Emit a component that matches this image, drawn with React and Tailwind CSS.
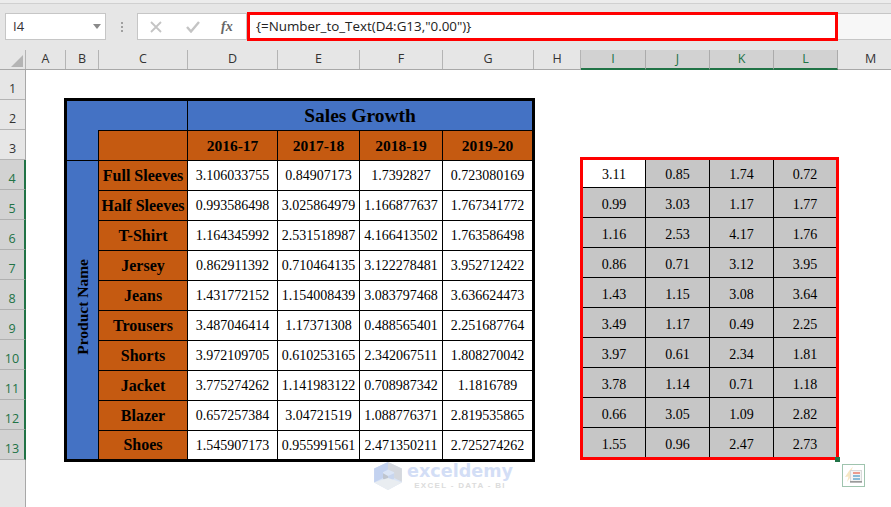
const cols = [
  ["A", "w-[40px]"], ["B", "w-[33px]"], ["C", "w-[89px]"], ["D", "w-[90px]"], ["E", "w-[82px]"], ["F", "w-[83px]"], ["G", "w-[91px]"], ["H", "w-[47px]"],
  ["I", "w-[65px]", 1], ["J", "w-[64px]", 1], ["K", "w-[64px]", 1], ["L", "w-[64px]", 1], ["M", "w-[66px]"],
];
const names = ["Full Sleeves", "Half Sleeves", "T-Shirt", "Jersey", "Jeans", "Trousers", "Shorts", "Jacket", "Blazer", "Shoes"];
const full = [
  ["3.106033755", "0.84907173", "1.7392827", "0.723080169"],
  ["0.993586498", "3.025864979", "1.166877637", "1.767341772"],
  ["1.164345992", "2.531518987", "4.166413502", "1.763586498"],
  ["0.862911392", "0.710464135", "3.122278481", "3.952712422"],
  ["1.431772152", "1.154008439", "3.083797468", "3.636624473"],
  ["3.487046414", "1.17371308", "0.488565401", "2.251687764"],
  ["3.972109705", "0.610253165", "2.342067511", "1.808270042"],
  ["3.775274262", "1.141983122", "0.708987342", "1.1816789"],
  ["0.657257384", "3.04721519", "1.088776371", "2.819535865"],
  ["1.545907173", "0.955991561", "2.471350211", "2.725274262"],
];
const short = [
  ["3.11", "0.85", "1.74", "0.72"], ["0.99", "3.03", "1.17", "1.77"], ["1.16", "2.53", "4.17", "1.76"],
  ["0.86", "0.71", "3.12", "3.95"], ["1.43", "1.15", "3.08", "3.64"], ["3.49", "1.17", "0.49", "2.25"],
  ["3.97", "0.61", "2.34", "1.81"], ["3.78", "1.14", "0.71", "1.18"], ["0.66", "3.05", "1.09", "2.82"],
  ["1.55", "0.96", "2.47", "2.73"],
];
const years = ["2016-17", "2017-18", "2018-19", "2019-20"];
const ui = "font-['Open_Sans',sans-serif]";
const serif = "font-['Liberation_Serif',serif]";

function Watermark() {
  return (
    <div className="absolute left-[373px] top-[461px] flex items-start gap-[4px]">
      <svg width="30" height="30" viewBox="0 0 27 32" preserveAspectRatio="none">
        <polygon points="13.5,1 26,8 26,23 13.5,31 1,23 1,8" fill="#dbe5f6" />
        <polygon points="13.5,1 1,8 1,23 9,18 9,12 13.5,9" fill="#c3d2f0" />
        <polygon points="13.5,1 26,8 26,22 19,18 19,12 13.5,9" fill="#d5d8de" />
        <polygon points="9,13 13.5,16 13.5,22 9,19" fill="#bfc5cf" />
        <polygon points="19,13 13.5,16 13.5,22 19,19" fill="#c9d6ee" />
        <polygon points="1,23 13.5,31 26,23 13.5,18" fill="#e9edf1" />
      </svg>
      <div className="flex flex-col items-center">
        <span className="font-['DejaVu_Sans',sans-serif] text-[17.6px] leading-[20px] font-bold text-[#d3def6]">exceldemy</span>
        <span className="font-['Liberation_Sans',sans-serif] text-[8px] leading-[9px] font-bold tracking-[1.3px] text-[#dcdcdc]">EXCEL - DATA - BI</span>
      </div>
    </div>
  );
}

function SmartTag() {
  return (
    <div className="absolute left-[842px] top-[464px] flex h-[23px] w-[23px] items-center justify-center border border-[#9fc4ae] bg-white">
      <svg width="19" height="19" viewBox="0 0 19 19">
        <path d="M9 0.5 L5 5 L1 11 L4.5 10.5 L3 16 L9 8 L6 8.5 Z" fill="#f6e7c3" />
        <rect x="6" y="4" width="12" height="13" fill="#d9d9d9" />
        <rect x="7" y="5" width="10" height="11" fill="#f4f4f4" />
        <rect x="9" y="6" width="7" height="2" fill="#ec9b8d" />
        <rect x="9" y="9" width="7" height="2" fill="#8bbcd8" />
        <rect x="9" y="12" width="7" height="2" fill="#8bbcd8" />
        <rect x="6" y="15" width="12" height="1.5" fill="#9a9a9a" />
      </svg>
    </div>
  );
}

export default function App() {
  return (
    <div className="relative flex h-[507px] w-[891px] flex-col overflow-hidden bg-white">
      {/* Formula bar */}
      <div className="h-[50px] shrink-0 bg-[#e6e6e6]">
        <div className="h-[4px] border-b border-[#d0d0d0] bg-[#ececec]" />
        <div className="mt-[9px] flex h-[27px] items-stretch">
          <div className={`ml-[5px] flex w-[101px] items-center justify-between border border-[#c6c6c6] bg-white pl-[7px] pr-[4px] text-[13px] text-[#333] ${ui}`}>
            <span>I4</span>
            <span className="h-0 w-0 border-x-[4px] border-t-[5px] border-x-transparent border-t-[#8a8a8a]" />
          </div>
          <div className="flex w-[31px] flex-col items-center justify-center gap-[2px]">
            <span className="h-[2px] w-[2px] bg-[#a0a0a0]" />
            <span className="h-[2px] w-[2px] bg-[#a0a0a0]" />
            <span className="h-[2px] w-[2px] bg-[#a0a0a0]" />
          </div>
          <div className="flex w-[110px] items-center border border-[#c6c6c6] bg-white">
            <svg className="ml-[12px]" width="12" height="12" viewBox="0 0 12 12"><path d="M1 1 L11 11 M11 1 L1 11" stroke="#c4c4c4" strokeWidth="1.8" fill="none" /></svg>
            <svg className="ml-[24px]" width="14" height="12" viewBox="0 0 14 12"><path d="M1 6 L5 10.5 L13 1" stroke="#c4c4c4" strokeWidth="2.4" fill="none" /></svg>
            <span className="ml-[21px] font-['Liberation_Serif',serif] text-[14px] font-bold italic text-[#666]">fx</span>
          </div>
          <div className="relative z-10 -my-[1px] flex w-[591px] items-center border-[3px] border-[#ff0000] bg-white pl-[6px] text-[13.4px] text-[#222] font-['Open_Sans',sans-serif]">
            {'{=Number_to_Text(D4:G13,"0.00")}'}
          </div>
          <div className="grow border-y border-[#c6c6c6] bg-[#f7f7f7]" />
        </div>
      </div>

      {/* Column headers */}
      <div className="flex h-[20px] shrink-0 border-b border-[#a8a8a8] bg-[#e6e6e6]">
        <div className="flex w-[26px] shrink-0 items-end justify-end border-r border-[#b4b4b4] p-[2px]">
          <span className="h-0 w-0 border-b-[12px] border-l-[12px] border-b-[#b4b4b4] border-l-transparent" />
        </div>
        {cols.map(([c, w, sel]) => (
          <div key={c} className={`${w} flex shrink-0 items-center justify-center border-r text-[12.5px] ${ui} ${sel ? "-mb-[1px] border-b-2 border-r-[#ababab] border-b-[#217346] bg-[#d2d2d2] text-[#217346]" : "border-[#b4b4b4] text-[#333]"}`}>{c}</div>
        ))}
      </div>

      {/* Sheet */}
      <div className="flex grow">
        <div className="flex w-[26px] shrink-0 flex-col border-r border-[#a8a8a8] bg-[#e6e6e6]">
          {Array.from({ length: 13 }, (_, i) => i + 1).map((n) => {
            const sel = n >= 4;
            return (
              <div key={n} className={`flex h-[30px] shrink-0 items-end justify-center border-b pb-px text-[12.5px] leading-[18px] ${ui} ${sel ? "-mr-[1px] border-r-2 border-b-[#b0b0b0] border-r-[#217346] bg-[#d2d2d2] text-[#217346]" : "border-[#b4b4b4] text-[#333]"}`}>{n}</div>
            );
          })}
        </div>

        <div className="flex items-start pl-[38px] pt-[28px]">
          <table className={`w-[468px] table-fixed border-collapse border-[3px] border-black text-black ${serif}`}>
            <colgroup>
              <col className="w-[33px]" /><col className="w-[89px]" /><col className="w-[90px]" /><col className="w-[82px]" /><col className="w-[83px]" /><col className="w-[91px]" />
            </colgroup>
            <tbody>
              <tr className="h-[31px]">
                <td colSpan={2} className="bg-[#4472c4] border-b-0 border-r border-black" />
                <td colSpan={4} className="border-b border-black bg-[#4472c4] text-center text-[19.5px] font-bold">Sales Growth</td>
              </tr>
              <tr className="h-[30px]">
                <td className="bg-[#4472c4]" />
                <td className="border border-black bg-[#c55a11]" />
                {years.map((y) => <td key={y} className="border border-black bg-[#c55a11] text-center text-[15.5px] font-bold">{y}</td>)}
              </tr>
              {names.map((n, i) => (
                <tr key={n} className="h-[30px]">
                  {i === 0 && (
                    <td rowSpan={10} className="border-t border-r border-black bg-[#4472c4] text-center align-middle">
                      <span className="inline-block rotate-180 text-[15.5px] font-bold [writing-mode:vertical-rl]">Product Name</span>
                    </td>
                  )}
                  <td className="whitespace-nowrap border border-black bg-[#c55a11] px-0 text-center text-[16px] font-bold">{n}</td>
                  {full[i].map((v, j) => <td key={j} className="border border-black bg-white text-center text-[14px]">{v}</td>)}
                </tr>
              ))}
            </tbody>
          </table>

          <div className="ml-[45px] mt-[59px]">
            <table className={`h-[303px] w-[259px] table-fixed border-collapse border-[3px] border-[#ff0000] text-black ${serif}`}>
              <tbody>
                {short.map((r, i) => (
                  <tr key={i}>
                    {r.map((v, j) => (
                      <td key={j} className={`border border-black text-center text-[14px] ${i === 0 ? "pt-[2px]" : "pt-[4px]"} ${i === 0 && j === 0 ? "bg-white" : "bg-[#c6c6c6]"}`}>{v}</td>
                    ))}
                  </tr>
                ))}
              </tbody>
            </table>
          </div>
        </div>
      </div>

      <span className="absolute left-[835px] top-[457px] h-[5px] w-[5px] bg-[#217346]" />
      <Watermark />
      <SmartTag />
    </div>
  );
}
